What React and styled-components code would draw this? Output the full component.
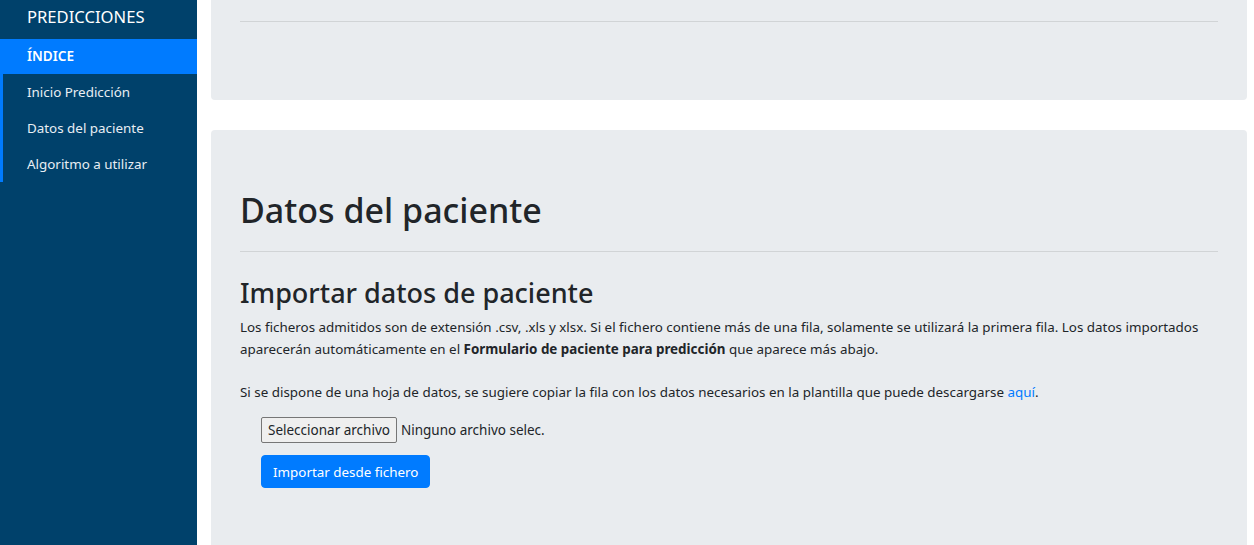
import React from "react";
import styled, { createGlobalStyle } from "styled-components";

const GlobalStyle = createGlobalStyle`
  html, body {
    margin: 0;
    padding: 0;
    background: #ffffff;
  }
  body {
    font-family: "Noto Sans", "Open Sans", Arial, sans-serif;
    font-size: 13.4px;
    line-height: 1.5;
    color: #212529;
  }
  * {
    box-sizing: border-box;
  }
`;

const Page = styled.div`
  display: flex;
  min-height: 545px;
  height: 100vh;
  overflow: hidden;
`;

const Sidebar = styled.nav`
  width: 197px;
  flex-shrink: 0;
  background-color: #00416b;
  color: #ffffff;
`;

const Brand = styled.div`
  padding: 5px 0 0 27px;
  height: 39px;
  font-size: 16.6px;
  text-transform: uppercase;
`;

const NavHeader = styled.div`
  height: 35px;
  display: flex;
  align-items: center;
  padding-left: 27px;
  background-color: #007bff;
  font-weight: 600;
  font-size: 13.6px;
`;

const NavList = styled.ul`
  list-style: none;
  margin: 0;
  padding: 0;
  border-left: 3px solid #007bff;
`;

const NavItem = styled.li`
  height: 36px;
  display: flex;
  align-items: center;
  padding-left: 24px;
  font-size: 13.4px;
  color: #e8eef4;
  cursor: pointer;
`;

const Main = styled.main`
  flex: 1;
  padding: 0 7px 0 14px;
  display: flex;
  flex-direction: column;
  gap: 30px;
`;

const Jumbotron = styled.section`
  background-color: #e9ecef;
  border-radius: ${(p) => (p.$cut ? "0 0 4px 4px" : "4px")};
  padding: ${(p) => (p.$cut ? "21px 29px 78px" : "60px 29px 80px")};
`;

const Rule = styled.hr`
  margin: ${(p) => (p.$flush ? "0" : "14px 0 25px")};
  border: 0;
  border-top: 1px solid rgba(0, 0, 0, 0.1);
`;

const Title = styled.h1`
  margin: 0 0 20px;
  font-size: 34px;
  font-weight: 500;
  line-height: 1.2;
`;

const Subtitle = styled.h2`
  margin: 0 0 7px;
  font-size: 27px;
  font-weight: 500;
  line-height: 1.2;
`;

const Text = styled.p`
  margin: 0 0 ${(p) => p.$gap || 14}px;
  font-size: 13.4px;
  line-height: 22px;
`;

const Link = styled.a`
  color: #007bff;
  text-decoration: none;
`;

const Form = styled.div`
  padding-left: 21px;
  display: flex;
  flex-direction: column;
  align-items: flex-start;
  gap: 12px;
`;

const FileRow = styled.div`
  display: flex;
  align-items: center;
  gap: 4px;
  font-size: 13.5px;
`;

const FileButton = styled.button`
  font-family: inherit;
  font-size: 13.5px;
  height: 26px;
  padding: 0 6px;
  color: #212529;
  background: #efefef;
  border: 1px solid #767676;
  border-radius: 2px;
`;

const PrimaryButton = styled.button`
  font-family: inherit;
  font-size: 13.4px;
  height: 33px;
  padding: 0 11px;
  color: #ffffff;
  background-color: #007bff;
  border: 1px solid #007bff;
  border-radius: 4px;
  cursor: pointer;
`;

const App = () => {
  return (
    <>
      <GlobalStyle />
      <Page>
        <Sidebar>
          <Brand>Predicciones</Brand>
          <NavHeader>ÍNDICE</NavHeader>
          <NavList>
            <NavItem>Inicio Predicción</NavItem>
            <NavItem>Datos del paciente</NavItem>
            <NavItem>Algoritmo a utilizar</NavItem>
          </NavList>
        </Sidebar>
        <Main>
          <Jumbotron $cut>
            <Rule $flush />
          </Jumbotron>
          <Jumbotron>
            <Title>Datos del paciente</Title>
            <Rule />
            <Subtitle>Importar datos de paciente</Subtitle>
            <Text $gap={21}>
              Los ficheros admitidos son de extensión .csv, .xls y xlsx. Si el
              fichero contiene más de una fila, solamente se utilizará la
              primera fila. Los datos importados aparecerán automáticamente en
              el <b>Formulario de paciente para predicción</b> que aparece más
              abajo.
            </Text>
            <Text $gap={14}>
              Si se dispone de una hoja de datos, se sugiere copiar la fila con
              los datos necesarios en la plantilla que puede descargarse{" "}
              <Link href="#">aquí</Link>.
            </Text>
            <Form>
              <FileRow>
                <FileButton>Seleccionar archivo</FileButton>
                <span>Ninguno archivo selec.</span>
              </FileRow>
              <PrimaryButton>Importar desde fichero</PrimaryButton>
            </Form>
          </Jumbotron>
        </Main>
      </Page>
    </>
  );
};

export default App;
